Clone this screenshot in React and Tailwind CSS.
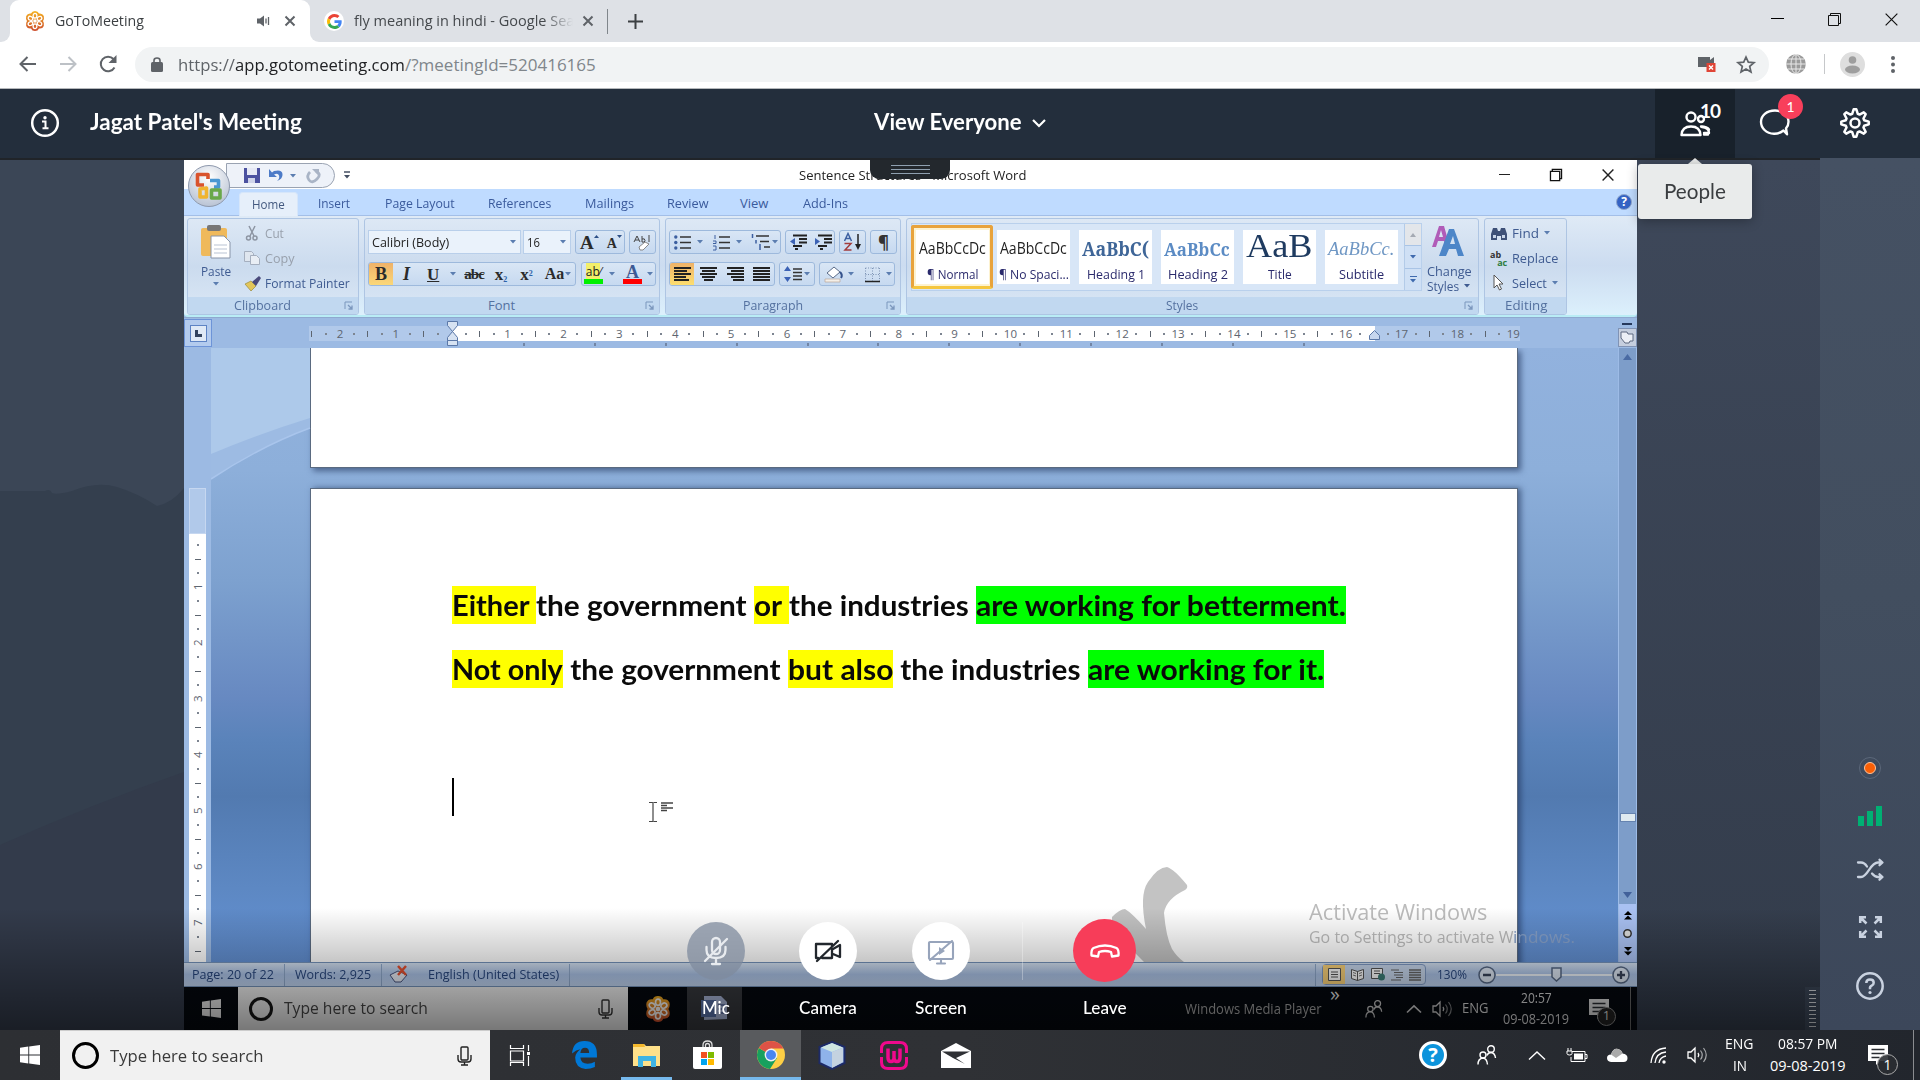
import React, { useLayoutEffect, useRef, useState } from "react";

/* Text that stretches horizontally to fill the width of its own box. */
function Fit({ className = "", children }) {
  const outer = useRef(null);
  const inner = useRef(null);
  const [k, setK] = useState(1);
  useLayoutEffect(() => {
    setK(outer.current.clientWidth / inner.current.offsetWidth);
  }, []);
  return (
    <span ref={outer} className={"flex shrink-0 items-center whitespace-pre leading-none " + className}>
      <span ref={inner} className="block shrink-0 origin-left" style={{ transform: `scaleX(${k})` }}>{children}</span>
    </span>
  );
}

function Svg({ w, h, className = "", children, vb }) {
  return (
    <svg width={w} height={h} viewBox={vb || `0 0 ${w} ${h}`} fill="none" className={"block shrink-0 overflow-visible " + className}>
      {children}
    </svg>
  );
}

const Caret = ({ className = "", c = "#5b7db0" }) => (
  <Svg w={6} h={4} className={className}><path d="M0 0h6L3 3.5z" fill={c} /></Svg>
);

const Flower = ({ s = 20, className = "" }) => (
  <Svg w={s} h={s} vb="0 0 20 20" className={className}>
    <defs><linearGradient id="fl" x1="0" y1="0" x2="0" y2="1"><stop offset="0" stopColor="#f5b321" /><stop offset="1" stopColor="#cc4b2c" /></linearGradient></defs>
    <path d="M10 0Q13 0 14 2.5Q17.5 2 18.8 5Q19.5 8 18 10Q19.5 12 18.8 15Q17.5 18 14 17.5Q13 20 10 20Q7 20 6 17.5Q2.5 18 1.2 15Q.5 12 2 10Q.5 8 1.2 5Q2.5 2 6 2.5Q7 0 10 0z" fill="url(#fl)" />
    <g stroke="#fff" strokeWidth="1.3">
      {[0, 60, 120, 180, 240, 300].map((a) => <ellipse key={a} cx="10" cy="4.8" rx="1.9" ry="2.4" transform={`rotate(${a} 10 10)`} />)}
    </g>
    <circle cx="10" cy="10" r="1.8" fill="#fff" />
  </Svg>
);

const Cross = ({ s = 10, className = "", c = "#5f6368", sw = 2 }) => (
  <Svg w={s} h={s} vb="0 0 10 10" className={className}><path d="M.5.5l9 9M9.5.5l-9 9" stroke={c} strokeWidth={sw} /></Svg>
);

const WinRestore = ({ s = 13, className = "", sw = 1 }) => (
  <Svg w={s} h={s} vb="0 0 13 13" className={className}><path d="M.5 2.5h10v10H.5zM2.5 2.5v-2h10v10h-2" stroke="#111" strokeWidth={sw} /></Svg>
);

const Mic = ({ className = "", c = "#333" }) => (
  <Svg w={15} h={20} className={className}>
    <rect x="4" y="1" width="7" height="13" rx="1" stroke={c} strokeWidth="1.4" />
    <path d="M1 9v4q0 3 3 3h7q3 0 3-3V9M7.500 16v3M4 19h7" stroke={c} strokeWidth="1.4" />
  </Svg>
);

const WinLogo = ({ s = 20, className = "", c = "#fff" }) => (
  <Svg w={s} h={s} vb="0 0 20 20" className={className}>
    <path d="M0 2.800l8.300-1.200v8H0zM9.200 1.500L20 0v9.600H9.200zM0 10.500h8.300v8L0 17.300zM9.200 10.500H20V20L9.200 18.500z" fill={c} />
  </Svg>
);

const PeopleGlyph = ({ s = 20, className = "", c = "#fff" }) => (
  <Svg w={s} h={s} vb="0 0 20 20" className={className}>
    <g stroke={c} strokeWidth="1.4">
      <circle cx="6" cy="10" r="3" /><circle cx="14" cy="4" r="3.3" />
      <path d="M1 19.500q0-6 5-6.500q4 .5 4.500 6.500M10 10.500q1-3 4-3q4 .5 4.500 5.500" />
    </g>
  </Svg>
);

const Speaker = ({ className = "", c = "#fff", s = 20 }) => (
  <Svg w={s} h={s} vb="0 0 20 20" className={className}>
    <path d="M1 7h3l4-4v14l-4-4H1z" stroke={c} strokeWidth="1.3" />
    <path d="M11 8q1.500 2 0 4" stroke={c} strokeWidth="1.3" />
    <path d="M13.500 5.500q3.500 4.500 0 9M16.500 3q5.500 7 0 14" stroke={c} strokeWidth="1.2" opacity=".6" />
  </Svg>
);

const Note = ({ className = "", c = "#fff", line = "#2a2d32" }) => (
  <Svg w={20} h={20} className={className}>
    <path d="M0 0h20v16h-8l-4 4v-4H0z" fill={c} /><path d="M3.500 4.500h13M3.500 8.500h13M3.500 12.500h8" stroke={line} strokeWidth="1.3" />
  </Svg>
);

/* ---------- Browser chrome ---------- */
function Browser() {
  return (
    <div className="h-[89px] border-b border-[#b5b8bb] bg-white font-['Open_Sans',sans-serif]">
      <div className="flex h-[42px] items-center bg-[#dee1e6]">
        <div className="flex h-[42px] w-2.5 items-end overflow-hidden bg-white"><div className="h-[42px] w-2.5 rounded-br-[9px] bg-[#dee1e6]" /></div>
        <div className="flex h-[42px] w-[300px] items-center rounded-t-[9px] bg-white">
          <Flower className="ml-[15px]" />
          <Fit className="ml-2.5 w-[89px] text-[14.5px] text-[#3c4043]">GoToMeeting</Fit>
          <Svg w={13} h={12} className="ml-[113px]"><path d="M0 3.500h3L7 .5v11L3 8.500H0z" fill="#5f6368" /><path d="M9 3.500v5M11.500 2v8" stroke="#5f6368" strokeWidth="1.3" /></Svg>
          <Cross className="ml-[15px]" />
        </div>
        <div className="flex h-[42px] w-3 overflow-hidden bg-white"><div className="h-[42px] w-3 rounded-bl-[9px] bg-[#dee1e6]" /></div>
        <div className="ml-[2px] flex h-5 w-5 shrink-0 items-center justify-center rounded-full bg-white">
          <Svg w={15} h={15} vb="0 0 48 48">
            <path fill="#EA4335" d="M24 9.500c3.540 0 6.710 1.220 9.210 3.600l6.850-6.850C35.900 2.380 30.470 0 24 0 14.620 0 6.510 5.380 2.560 13.220l7.980 6.190C12.430 13.720 17.740 9.500 24 9.500z" />
            <path fill="#4285F4" d="M46.980 24.550c0-1.570-.15-3.090-.38-4.550H24v9.020h12.940c-.58 2.960-2.260 5.480-4.780 7.180l7.730 6c4.510-4.180 7.090-10.360 7.090-17.650z" />
            <path fill="#FBBC05" d="M10.530 28.590c-.48-1.450-.76-2.990-.76-4.590s.27-3.140.76-4.590l-7.980-6.190C.92 16.460 0 20.120 0 24c0 3.880.92 7.540 2.560 10.780l7.970-6.190z" />
            <path fill="#34A853" d="M24 48c6.480 0 11.930-2.130 15.890-5.810l-7.730-6c-2.150 1.450-4.920 2.300-8.160 2.300-6.260 0-11.570-4.220-13.470-9.910l-7.980 6.190C6.510 42.620 14.620 48 24 48z" />
          </Svg>
        </div>
        <div className="ml-2.5 w-[220px] overflow-hidden [mask-image:linear-gradient(to_right,black_190px,transparent_219px)]">
          <Fit className="h-6 w-[220px] text-[14.5px] text-[#45494d]">fly meaning in hindi - Google Sea</Fit>
        </div>
        <Cross className="ml-[9px]" />
        <div className="ml-[14px] h-[25px] w-px bg-[#80868b]" />
        <Svg w={15} h={15} className="ml-5"><path d="M7.500 0v15M0 7.500h15" stroke="#3c4043" strokeWidth="2" /></Svg>
        <div className="ml-auto mr-[22px] flex items-center gap-[44px]">
          <div className="mb-[5px] h-px w-[13px] bg-black" />
          <WinRestore className="mb-[4px]" />
          <Cross s={13} c="#111" sw={0.9} className="mb-[4px]" />
        </div>
      </div>
      <div className="flex h-[46px] items-center pb-[2px]">
        <Svg w={17} h={16} className="ml-[19px]"><path d="M17 8H2M8.500 1L1.500 8l7 7" stroke="#5f6368" strokeWidth="2" /></Svg>
        <Svg w={17} h={16} className="ml-6"><path d="M0 8h15M8.500 1l7 7-7 7" stroke="#bdc1c6" strokeWidth="2" /></Svg>
        <Svg w={18} h={18} className="ml-[22px]"><path d="M15.500 12.500A7.300 7.300 0 1 1 14.500 4" stroke="#5f6368" strokeWidth="2" /><path d="M17.500 0v8h-8z" fill="#5f6368" /></Svg>
        <div className="ml-[18px] flex h-[35px] w-[1634px] items-center rounded-full bg-[#f1f3f4]">
          <Svg w={12} h={15} className="ml-4"><rect y="5" width="12" height="10" rx="1.500" fill="#5f6368" /><path d="M3 6V3.500Q3 1 6 1t3 2.500V6" stroke="#5f6368" strokeWidth="1.600" /></Svg>
          <Fit className="ml-[15px] w-[57px] text-[17px] text-[#5f6368]">https://</Fit>
          <Fit className="w-[170px] text-[17px] text-[#202124]">app.gotomeeting.com</Fit>
          <Fit className="w-[191px] text-[17px] text-[#80868b]">/?meetingId=520416165</Fit>
          <Svg w={18} h={16} className="ml-auto"><path d="M0 1h12v3l4-3v10H0z" fill="#5f6368" /><path d="M8.500 7h9v9h-9z" fill="#e04436" /><path d="M11 9.500l4 4M15 9.500l-4 4" stroke="#fff" strokeWidth="1.400" /></Svg>
          <Svg w={20} h={19} className="ml-5 mr-[13px]"><path d="M10 2l2.300 5.200 5.700.5-4.300 3.700 1.300 5.600-5-3-5 3 1.300-5.600L2 7.700l5.700-.5z" stroke="#5f6368" strokeWidth="1.700" /></Svg>
        </div>
        <Svg w={20} h={20} className="ml-[17px]">
          <circle cx="10" cy="10" r="9.800" fill="#9a9a9a" />
          <path d="M10 0v20M0 10h20M2 5h16M2 15h16" stroke="#e8e8e8" /><ellipse cx="10" cy="10" rx="5" ry="9.500" stroke="#e8e8e8" />
        </Svg>
        <div className="ml-[18px] h-5 w-px bg-[#c6c8ca]" />
        <Svg w={25} h={25} className="ml-[15px]"><circle cx="12.500" cy="12.500" r="12.500" fill="#dedede" /><circle cx="12.500" cy="8" r="3.800" fill="#9e9e9e" /><ellipse cx="12.500" cy="17.500" rx="7.500" ry="4" fill="#9e9e9e" /></Svg>
        <Svg w={4} h={17} className="ml-[26px]"><g fill="#5f6368"><circle cx="2" cy="2" r="2" /><circle cx="2" cy="8.500" r="2" /><circle cx="2" cy="15" r="2" /></g></Svg>
      </div>
    </div>
  );
}

/* ---------- Meeting header ---------- */
const gear = Array.from({ length: 32 }, (_, i) => {
  const a = (i / 32) * Math.PI * 2 + Math.PI / 32;
  const r = i % 4 === 0 || i % 4 === 3 ? 13.800 : 9.600;
  return `${i ? "L" : "M"}${(15 + r * Math.sin(a)).toFixed(2)} ${(15 - r * Math.cos(a)).toFixed(2)}`;
}).join("") + "z";

function Header() {
  return (
    <div className="flex h-[69px] items-center bg-[#232e3c] font-['Lato',sans-serif] text-white">
      <Svg w={28} h={28} className="mb-[2px] ml-[31px]"><circle cx="14" cy="14" r="12.800" stroke="#fff" strokeWidth="2.500" /><circle cx="14" cy="8.800" r="1.700" fill="#fff" /><path d="M11 12.500h3.500v6.500M11.500 19.300h6" stroke="#fff" strokeWidth="2" /></Svg>
      <Fit className="mb-[4px] ml-[31px] w-[212px] text-[23px] font-bold">Jagat Patel's Meeting</Fit>
      <Fit className="mb-[4px] ml-[572px] w-[148px] text-[22px] font-bold">View Everyone</Fit>
      <Svg w={14} h={8} className="mb-[2px] ml-[10px]"><path d="M1 1l6 6 6-6" stroke="#fff" strokeWidth="2.200" /></Svg>
      <div className="relative ml-[609px] flex h-[69px] w-20 shrink-0 bg-[#18212b]">
        <Svg w={32} h={26} className="ml-[25px] mt-[22px]">
          <g stroke="#fff" strokeWidth="2.400" strokeLinejoin="round" strokeLinecap="round">
            <circle cx="11" cy="6" r="4.500" /><circle cx="21" cy="8" r="3" />
            <path d="M1.500 24q.5-8.500 9.500-8.500t9.500 8.500zM21 15.500q6 0 8 3M24 23.500h4" /><path d="M22 16q7 .5 7 6h-5" />
          </g>
        </Svg>
        <span className="absolute left-[45px] top-[12px] text-[19px] font-bold leading-[20px] tracking-[-1px]">10</span>
      </div>
      <div className="relative mb-[2px] ml-[25px] h-[27px] w-8 shrink-0">
        <Svg w={30} h={27}><path d="M23.500 21.500Q19 25 14 24.800C6 24.500 1 19 1 12.800S6.500 1.500 15 1.500s13.500 5 13.500 11.300q0 4-2.500 6.500l1 6z" stroke="#fff" strokeWidth="2.400" strokeLinejoin="round" /></Svg>
        <span className="absolute -top-[15px] left-[18px] flex h-[25px] w-[25px] items-center justify-center rounded-full bg-[#f83f5b] text-[14px]">1</span>
      </div>
      <Svg w={30} h={30} className="mb-[2px] ml-12"><path d={gear} stroke="#fff" strokeWidth="2.500" strokeLinejoin="round" /><circle cx="15" cy="15" r="4.500" stroke="#fff" strokeWidth="2.500" /></Svg>
    </div>
  );
}

/* ---------- Word ribbon ---------- */
const Group = ({ className = "", label, labelClass = "", launcher = true, children }) => (
  <div className={"flex h-[97px] shrink-0 flex-col overflow-hidden rounded-[3px] border border-[#aec5e3] bg-gradient-to-b from-[#dde8f5] via-[#cbdbee] to-[#dbe8f6] " + className}>
    <div className="h-[78px] shrink-0">{children}</div>
    <div className="flex h-[17px] items-center justify-center bg-[#c1d8f0] text-[13px] text-[#54719f]">
      <div className={launcher ? "flex flex-1 justify-center pr-[7px]" : ""}><Fit className={labelClass}>{label}</Fit></div>
      {launcher && <Svg w={9} h={9} className="mr-[5px]"><path d="M1 8V1h7" stroke="#7b97bd" /><path d="M4 4l4 4M8 4.500V8H4.500" stroke="#7b97bd" strokeWidth="1.300" /></Svg>}
    </div>
  </div>
);
const Box = ({ className = "", children }) => (
  <div className={"flex h-6 shrink-0 items-center rounded-[3px] border border-[#9db9dc] bg-gradient-to-b from-[#d9e6f5] to-[#c6d9f0] " + className}>{children}</div>
);
const Tile = ({ sample, s, name, n }) => (
  <div className="flex h-[54px] w-[73px] shrink-0 flex-col overflow-hidden bg-white">
    <div className="flex h-[37px] items-center overflow-hidden pl-[3px]"><Fit className={s}>{sample}</Fit></div>
    <div className="flex h-[14px] justify-center text-[13px] text-[#2a2a6c]"><Fit className={n}>{name}</Fit></div>
  </div>
);
const Lines = ({ d, className = "", c = "#222" }) => (
  <Svg w={17} h={14} className={className}><path d={d} stroke={c} strokeWidth="1.800" /></Svg>
);
const serif = "font-['Liberation_Serif',serif] font-bold leading-none text-[#2b2b2b] ";

function Ribbon() {
  return (
    <div className="flex h-[101px] gap-[5px] rounded-b border-b-2 border-[#b9ecf5] bg-gradient-to-b from-[#dfeaf6] via-[#ccdcf0] to-[#dcf0fc] pl-[3px] pr-1 pt-[2px]">
      <Group className="w-[172px]" label="Clipboard" labelClass="w-[57px]">
        <div className="flex h-full pt-[5px]">
          <div className="ml-3 flex w-[32px] flex-col items-center">
            <Svg w={30} h={35}><rect x="0" y="4" width="26" height="28" rx="2" fill="#efb95b" /><rect x="6" y="1" width="14" height="6" rx="2" fill="#777" /><path d="M10 12h13l6 6v16H10z" fill="#fff" stroke="#8894a8" /><path d="M13 21h13M13 25h13M13 29h13" stroke="#b9c3d3" /></Svg>
            <Fit className="mt-[4px] h-4 w-[30px] text-[13px] text-[#3f5b91]">Paste</Fit>
            <Caret className="mt-[3px]" />
          </div>
          <div className="-mt-px ml-3 flex flex-col text-[13px] text-[#98a0ac]">
            <div className="flex h-[20px] items-center"><Svg w={16} h={15}><path d="M5 0l5 10M11 0L6 10" stroke="#8d95a3" strokeWidth="1.500" /><circle cx="4.500" cy="12" r="2" stroke="#8d95a3" strokeWidth="1.500" /><circle cx="11" cy="12" r="2" stroke="#8d95a3" strokeWidth="1.500" /></Svg><Fit className="ml-[5px] w-[19px]">Cut</Fit></div>
            <div className="mt-[5px] flex h-[20px] items-center"><Svg w={16} h={14}><path d="M.5.5h7l2 2v8h-9z" fill="#dfe6ef" stroke="#a5afbf" /><path d="M6.500 4.500h6l3 3v6h-9z" fill="#e9eef5" stroke="#a5afbf" /></Svg><Fit className="ml-[5px] w-[29px]">Copy</Fit></div>
            <div className="mt-[5px] flex h-[20px] items-center text-[#3f5b91]"><Svg w={17} h={15}><path d="M1 8l6-3 5 5-5 5z" fill="#e3c65a" stroke="#9a8a3c" strokeWidth=".7" /><path d="M8 6l7-6 2 2-5 8z" fill="#4a4a7c" /></Svg><Fit className="ml-1 w-[85px]">Format Painter</Fit></div>
          </div>
        </div>
      </Group>
      <Group className="w-[296px]" label="Font" labelClass="w-[27px]">
        <div className="flex pt-[11px]">
          <div className="ml-[3px] flex h-6 w-[153px] items-center border border-[#b9cfea] bg-[#eaf2fb] text-[13px] text-[#222]"><Fit className="ml-[3px] w-[77px]">Calibri (Body)</Fit><Caret className="ml-auto mr-1" /></div>
          <div className="ml-0.5 flex h-6 w-[48px] items-center border border-[#b9cfea] bg-[#eaf2fb] text-[13px] text-[#222]"><Fit className="ml-[3px] w-[13px]">16</Fit><Caret className="ml-auto mr-1" /></div>
          <Box className="ml-1 w-[50px]"><span className={serif + "ml-[4px] text-[19px]"}>A</span><Svg w={5} h={3} className="mb-3"><path d="M0 3h5L2.500 0z" fill="#2d4f86" /></Svg><span className={serif + "ml-2 mt-1 text-[14px]"}>A</span><Svg w={5} h={3} className="mb-3"><path d="M0 0h5L2.500 3z" fill="#2d4f86" /></Svg></Box>
          <Box className="ml-1 w-[27px]"><Svg w={18} h={16} className="ml-[3px]"><path d="M1 8L4 2l3 6M2 6h4M9 2v6M9 5q3-1 3 1.500T9 8M16 1v7" stroke="#444" /><path d="M6 13l6-5 4 2-6 6H7z" fill="#fff" stroke="#888" /></Svg></Box>
        </div>
        <div className="flex pt-[8px]">
          <Box className="ml-[3px] w-[208px] overflow-hidden">
            <div className="flex h-6 w-[24px] items-center justify-center bg-gradient-to-b from-[#eeb068] to-[#fbd979]"><span className={serif + "text-[18px]"}>B</span></div>
            <span className={serif + "ml-2.5 text-[18px] italic"}>I</span>
            <span className={serif + "ml-[17px] text-[17px] underline"}>U</span>
            <Caret className="ml-[11px]" />
            <span className={serif + "ml-2 text-[15px] tracking-[-1px] line-through"}>abc</span>
            <span className={serif + "ml-[11px] text-[17px]"}>x<sub className="text-[8px] text-[#2d62a8]">2</sub></span>
            <span className={serif + "ml-[13px] text-[17px]"}>x<sup className="text-[8px] text-[#2d62a8]">2</sup></span>
            <span className={serif + "ml-[12px] text-[16px]"}>Aa</span>
            <Caret className="ml-px" />
          </Box>
          <Box className="ml-[5px] w-[75px]">
            <div className="ml-[2px] flex w-[19px] flex-col items-center"><span className="text-[12px] leading-[14px] text-[#222]"><span className="bg-[#f3ef6a]">ab</span>⁄</span><div className="h-[5px] w-[19px] bg-[#00f000]" /></div>
            <Caret className="ml-1.5" />
            <div className="ml-2 flex w-[19px] flex-col items-center"><span className="font-['Liberation_Serif'] text-[18px] font-bold leading-[14px] text-[#3d5a94]">A</span><div className="h-[5px] w-[19px] bg-[#f00]" /></div>
            <Caret className="ml-[5px]" />
          </Box>
        </div>
      </Group>
      <Group className="w-[236px]" label="Paragraph" labelClass="w-[60px]">
        <div className="flex pt-[11px]">
          <Box className="ml-[3px] w-[112px]">
            <Svg w={17} h={15} className="ml-1"><path d="M6 2h11M6 7.500h11M6 13h11" stroke="#333" strokeWidth="1.600" /><g fill="#3c5fa0"><circle cx="1.800" cy="2" r="1.700" /><circle cx="1.800" cy="7.500" r="1.700" /><circle cx="1.800" cy="13" r="1.700" /></g></Svg>
            <Caret className="ml-1.5" />
            <Svg w={17} h={15} className="ml-2.5"><path d="M6 2h11M6 7.500h11M6 13h11" stroke="#333" strokeWidth="1.600" /><path d="M2 0v4M0 6h3v2.500H0M0 11h3v4H0" stroke="#3c5fa0" /></Svg>
            <Caret className="ml-[6px]" />
            <Svg w={19} h={16} className="ml-[9px]"><path d="M5 2h13M9 7.500h9M13 13h6" stroke="#333" strokeWidth="1.600" /><path d="M1.500 0v4M5 6v3.500M9 10v6" stroke="#3c5fa0" strokeWidth="1.500" /></Svg>
            <Caret className="ml-0.5" />
          </Box>
          <Box className="ml-1 w-[50px]">
            {["M6 4L1 7.500l5 3.500z", "M1 4l5 3.500L1 11z"].map((d, i) => (
              <Svg key={i} w={18} h={16} className={i ? "ml-[7px]" : "ml-[3px]"}><path d="M4 1.500h14M10 5h8M10 8.500h8M4 12h9M6 15h3" stroke="#222" strokeWidth="2" /><path d={d} fill="#3c62b5" /></Svg>
            ))}
          </Box>
          <Box className="ml-1 w-[27px]"><div className="ml-1 flex w-[8px]"><Svg w={8} h={18}><path d="M.5 8L4 .5 7.500 8M2 5.500h4" stroke="#3c5fa0" strokeWidth="1.500" /><path d="M.5 10.500h6.500l-6 6.500h6.500" stroke="#a33c3c" strokeWidth="1.500" /></Svg></div><Svg w={6} h={16} className="ml-[3px]"><path d="M3 0v12" stroke="#222" strokeWidth="1.500" /><path d="M0 10h6l-3 6z" fill="#222" /></Svg></Box>
          <Box className="ml-1 w-[27px] justify-center"><span className="text-[17px] font-bold leading-none text-[#333]">¶</span></Box>
        </div>
        <div className="flex pt-[8px]">
          <Box className="ml-[3px] w-[106px] overflow-hidden">
            <div className="flex h-6 w-[24px] items-center justify-center bg-gradient-to-b from-[#eeb068] to-[#fde06f]"><Lines d="M0 1h17M0 4h13M0 7h17M0 10h12M0 13h15" /></div>
            <Lines className="ml-1.5" d="M0 1h17M2 4h13M0 7h17M2 10h13M4 13h9" />
            <Lines className="ml-2.5" d="M0 1h17M4 4h13M0 7h17M4 10h13M6 13h11" />
            <Lines className="ml-[9px]" d="M0 1h17M0 4h17M0 7h17M0 10h17M0 13h17" />
          </Box>
          <Box className="ml-1 w-[36px]"><Svg w={18} h={18} className="ml-1"><path d="M0 6l3.500-5L7 6zM0 12l3.500 5L7 12z" fill="#3c62b5" /><path d="M9 4h9M9 7.500h9M9 11h9M9 14.500h9" stroke="#333" strokeWidth="1.700" /></Svg><Caret className="ml-[2px]" /></Box>
          <Box className="ml-1 w-[76px]"><Svg w={19} h={18} className="ml-1"><path d="M3 8l7-6 6 5-7 6z" fill="#fff" stroke="#5a6b88" /><path d="M16 7q3 3 1 6" stroke="#35528c" strokeWidth="2" /><path d="M1 14h15v3H1z" fill="#f4efe8" stroke="#b9a898" strokeWidth=".7" /></Svg><Caret className="ml-[5px]" /><Svg w={15} h={15} className="ml-[11px]"><path d="M.5 1h14M.5 7.500h14M.5 1v13M7.500 1v13M14.500 1v13" stroke="#7d93b5" strokeDasharray="1 1.500" /><path d="M0 14.500h15" stroke="#222" strokeWidth="1.500" /></Svg><Caret className="ml-1.5" /></Box>
        </div>
      </Group>
      <Group className="w-[573px]" label="Styles" labelClass="w-[32px]">
        <div className="flex">
          <div className="ml-1 mt-[4px] flex h-[68px] w-[511px] items-center border border-[#b9d0ec] bg-[#d8e6f7]">
            <div className="-ml-px flex h-[64px] w-[82px] shrink-0 items-center justify-center rounded-[3px] border-[3px] border-[#e8a33c] border-b-[#f5c63e] bg-[#fdf2cf]"><Tile sample="AaBbCcDc" s="w-[67px] text-[15.500px] text-[#222]" name="¶ Normal" n="w-[51px]" /></div>
            <div className="ml-[4px] flex gap-[9px]">
              <Tile sample="AaBbCcDc" s="w-[67px] text-[15.500px] text-[#222]" name="¶ No Spaci..." n="w-[70px]" />
              <Tile sample="AaBbC(" s="w-[67px] text-[20px] font-bold text-[#3f6698] font-['Noto_Serif','DejaVu_Serif',serif]" name="Heading 1" n="w-[58px]" />
              <Tile sample="AaBbCc" s="w-[66px] text-[18px] font-bold text-[#5b8bc4] font-['Noto_Serif','DejaVu_Serif',serif]" name="Heading 2" n="w-[60px]" />
              <Tile sample="AaB" s="w-[66px] pb-[5px] text-[34px] text-[#1f3b60] font-['Liberation_Serif',serif]" name="Title" n="w-[24px]" />
              <Tile sample="AaBbCc." s="w-[67px] text-[18px] italic text-[#6f97c4] font-['Liberation_Serif',serif]" name="Subtitle" n="w-[45px]" />
            </div>
            <div className="ml-auto flex h-full w-[17px] flex-col border-l border-[#b3cbe8]">
              <div className="flex flex-1 items-center justify-center bg-[#e3e6ea]"><Svg w={6} h={4}><path d="M0 4h6L3 0z" fill="#a5aab3" /></Svg></div>
              <div className="flex flex-1 items-center justify-center border-y border-[#a9c4e6] bg-[#cfe0f5]"><Caret c="#3f6aae" /></div>
              <div className="flex flex-1 flex-col items-center justify-center gap-0.5 bg-[#cfe0f5]"><div className="h-px w-[7px] bg-[#3f6aae]" /><Caret c="#3f6aae" /></div>
            </div>
          </div>
          <div className="ml-[4px] mt-[6px] flex w-[46px] flex-col items-center text-[13px] text-[#3f5b91]">
            <Svg w={34} h={32} className="mr-[3px]"><path d="M1 22L8 1h5l6 21h-4l-2-6H7l-2 6zM8 12h4l-2-7z" fill="#b05cb8" /><path d="M8 31L18 4h5l10 27h-6l-2-7h-7l-3 7zM19 19h5l-2-8z" fill="#4d86c8" /></Svg>
            <Fit className="mt-1.5 h-4 w-[45px]">Change</Fit>
            <div className="mt-[-1px] flex h-4 items-center gap-[5px] self-start pl-px"><Fit className="w-[32px]">Styles</Fit><Caret c="#3f5b91" /></div>
          </div>
        </div>
      </Group>
      <Group className="w-[83px]" label="Editing" labelClass="w-[42px]" launcher={false}>
        <div className="flex flex-col pl-[5px] pt-1 text-[13px] text-[#3f5b91]">
          <div className="flex h-[20px] items-center"><Svg w={18} h={15}><path d="M1 14V8l2-6h4l1 3h2l1-3h4l2 6v6h-6v-4H7v4z" fill="#3d5077" /><path d="M3 9h3v3H3zM12 9h3v3h-3z" fill="#c7d4e8" /></Svg><Fit className="ml-1 w-[27px]">Find</Fit><Caret className="ml-[5px]" /></div>
          <div className="mt-[5px] flex h-[20px] items-center"><div className="flex w-[18px] items-center text-[9px] font-bold leading-[9px] text-[#333]"><span className="mb-2">ab</span><span className="-ml-1 mt-2 text-[#2f7d3f]">ac</span></div><Fit className="ml-1 w-[46px]">Replace</Fit></div>
          <div className="mt-[5px] flex h-[20px] items-center"><Svg w={18} h={16}><path d="M4 0v13l3-3 2.500 5 2-1L9 9h4z" fill="#fff" stroke="#555" /></Svg><Fit className="ml-1 w-[35px]">Select</Fit><Caret className="ml-[5px]" /></div>
        </div>
      </Group>
    </div>
  );
}

const cells = (from, to) => {
  const out = [];
  for (let n = from; n <= to; n++) out.push("|", "·", n === 0 ? "" : String(Math.abs(n)), "·");
  return out;
};

function Ruler() {
  return (
    <div className="flex h-[30px] bg-[#9cbae3]">
      <div className="mt-px flex h-[28px] w-[28px] shrink-0 items-center justify-center border border-[#6d94d8] bg-[#b3cbee]"><div className="flex h-[17px] w-[17px] items-center justify-center border border-[#5d83c4] bg-[#dfe9f6]"><div className="h-[7px] w-[7px] border-b-[3px] border-l-[3px] border-[#33435e]" /></div></div>
      <div className="ml-[97px] mt-[8px] w-[1211px]">
        <div className="relative flex h-[15px] items-center bg-[linear-gradient(to_right,#b1c9ea_143px,#fff_143px,#fff_1066px,#b1c9ea_1066px)]">
          <div className="-ml-1 flex h-[15px] w-[1217px] overflow-hidden text-[11.500px] leading-[15px] text-[#5d6570]">
            {cells(-2, 19).slice(0, 87).map((t, i) => (
              <span key={i} className="flex w-[13.980px] shrink-0 items-center justify-center">{t === "|" ? <span className="h-[6px] w-px bg-[#5d6570]" /> : t === "·" ? <span className="h-[2px] w-[2px] bg-[#7d8591]" /> : t}</span>
            ))}
          </div>
          <Svg w={11} h={26} className="absolute left-[138px] top-[-5px]"><path d="M.5.5h10v4l-5 6 5 6v3H.5v-3l5-6-5-6zM.5 19.500h10v5H.5z" fill="#d6e2f2" stroke="#5b78a8" /></Svg>
          <Svg w={11} h={11} className="absolute left-[1060px] top-[4px]"><path d="M5.500.5l5 5v4H.5v-4z" fill="#c6d6ee" stroke="#5b78a8" /></Svg>
        </div>
        <div className="ml-[214px] flex h-[6px] items-center gap-[68.900px]">
          {Array.from({ length: 12 }, (_, i) => <span key={i} className="h-[3px] w-[2px] shrink-0 bg-[#7386a5]" />)}
        </div>
      </div>
      <div className="ml-auto flex w-[20px] flex-col items-center"><div className="mt-[5px] h-[2px] w-[10px] bg-[#26395c]" /><div className="mt-[3px] flex h-[19px] w-[19px] items-center justify-center border border-[#8093b5] bg-[#c5cede]"><Svg w={14} h={13}><path d="M1 1h6l1 2h5v7h-3l-1 2H5L1 7z" fill="#eceff6" stroke="#5d6880" /></Svg></div></div>
    </div>
  );
}

const mark = "bg-[#ff0] ";
const ok = "bg-[#0f0] ";

function Document() {
  return (
    <div className="flex h-[614px] bg-[#9cbae3]">
      <div className="w-[27px] shrink-0 overflow-hidden px-[5px] pt-[140px]">
        <div className="h-[46px] border border-[#c6d7f0] bg-[#b1c9ea]" />
        <div className="flex h-[430px] flex-col bg-white pt-1 text-[11.500px] text-[#5d6570]">
          {["·", "|", "·", "1", "·", ...cells(2, 7), "|", "·"].slice(0, 30).map((t, i) => (
            <span key={i} className="flex h-[14px] shrink-0 items-center justify-center leading-none">{t === "|" ? <span className="h-px w-[6px] bg-[#5d6570]" /> : t === "·" ? <span className="h-[2px] w-[2px] bg-[#7d8591]" /> : <span className="-rotate-90">{t}</span>}</span>
          ))}
        </div>
      </div>
      <div className="relative flex w-[1407px] shrink-0 flex-col overflow-hidden bg-[linear-gradient(to_bottom,#92b2de_0,#8dafda_20%,#7da1cf_38%,#6789c1_57%,#5a83ba_64%,#527ab0_73%,#5d88c3_88%,#6391d4_100%)] pl-[99px]">
        <Svg w={99} h={131} className="absolute left-0 top-0"><path d="M0 0h99v80Q50 98 0 131z" fill="#9dbbe3" /><path d="M0 0h99v70Q50 85 0 106z" fill="#adc9ea" /><path d="M0 131Q50 98 99 80" stroke="#a9c5ec" strokeWidth="1.500" /></Svg>
        <div className="h-[120px] w-[1208px] shrink-0 border-x border-b border-[#5a6a80] bg-white shadow-[3px_3px_6px_rgba(30,50,90,0.6)]" />
        <div className="mt-[20px] h-[500px] w-[1208px] shrink-0 border border-[#5a6a80] bg-white pl-[141px] pt-[97px] font-['Lato',sans-serif] text-[28px] font-bold text-[#0a0a0a] shadow-[3px_0_6px_rgba(30,50,90,0.6)] [font-variant-ligatures:none]">
          <div className="flex h-[38px]">
            <Fit className={mark + "w-[84px]"}>{"Either "}</Fit>
            <Fit className="w-[218px]">{"the government "}</Fit>
            <Fit className={mark + "w-[35px]"}>{"or "}</Fit>
            <Fit className="w-[187px]">{"the industries "}</Fit>
            <Fit className={ok + "w-[370px]"}>are working for betterment.</Fit>
          </div>
          <div className="mt-[26px] flex h-[38px]">
            <Fit className={mark + "w-[111px]"}>Not only</Fit>
            <Fit className="w-[225px]">{" the government "}</Fit>
            <Fit className={mark + "w-[105px]"}>but also</Fit>
            <Fit className="w-[195px]">{" the industries "}</Fit>
            <Fit className={ok + "w-[236px]"}>are working for it.</Fit>
          </div>
          <div className="mt-[90px] h-[38px] w-[2px] bg-black" />
        </div>
        <Svg w={24} h={20} className="absolute left-[438px] top-[454px]"><path d="M0 .5h3.500q.5 0 .5 1v17q0 1-.5 1H0M8 .5H4.500M8 19.500H4.500" stroke="#444" strokeWidth="1.200" /><path d="M12 1h12M12 3.500h6M12 6h12M12 8.500h6" stroke="#444" strokeWidth="1.300" /></Svg>
        <Svg w={76} h={95} className="absolute left-[901px] top-[519px]"><path d="M55 0Q62 2 75 18Q76 21 73 23Q54 32 52 46Q54 70 60 82Q65 90 72 95H32Q14 78 0 56L0 50Q8 42 13 42Q20 46 34 62Q27 28 36 15Q46 0 55 0z" fill="#c3c3c3" /></Svg>
        <div className="absolute left-[1098px] top-[551px] font-['Open_Sans',sans-serif] text-[#bcbcbc]">
          <Fit className="h-[26px] w-[178px] text-[21px]">Activate Windows</Fit>
          <div className="-mt-px flex"><Fit className="h-[25px] w-[204px] text-[17px]">{"Go to Settings to activate W"}</Fit><Fit className="h-[25px] w-[62px] text-[17px] text-[#86a0c8]">indows.</Fit></div>
        </div>
      </div>
      <div className="flex w-[19px] shrink-0 flex-col items-center border-x border-[#9dbbe6] bg-[#7d9dc9]">
        <Svg w={9} h={6} className="mt-[6px]"><path d="M0 6h9L4.500 0z" fill="#4a6ba3" /></Svg>
        <div className="mt-[453px] h-[9px] w-[16px] border border-[#6583b0] bg-[#dfeaf0]" />
        <Svg w={9} h={6} className="mt-[70px]"><path d="M0 0h9L4.500 6z" fill="#42619a" /></Svg>
        <div className="mt-auto flex h-[58px] w-full flex-col items-center justify-around bg-[#a9c1f2] py-0.5">
          <Svg w={8} h={9}><path d="M0 4l4-4 4 4zM0 8.500l4-4 4 4z" fill="#000" /></Svg>
          <Svg w={9} h={9}><circle cx="4.500" cy="4.500" r="3.700" fill="#ddd" stroke="#333" strokeWidth="1.500" /></Svg>
          <Svg w={8} h={9}><path d="M0 0h8L4 4zM0 4.500h8l-4 4z" fill="#000" /></Svg>
        </div>
      </div>
    </div>
  );
}

function StatusBar() {
  const div = "h-[22px] w-px bg-[#8fa9cc] ";
  return (
    <div className="flex h-[25px] items-center border-y border-[#7593bb] bg-gradient-to-b from-[#d6e3f3] via-[#adc5ea] to-[#c4d8f4] text-[13px] text-[#28477f]">
      <Fit className="ml-[8px] w-[82px]">Page: 20 of 22</Fit><div className={div + "ml-2.5"} />
      <Fit className="ml-2.5 w-[76px]">Words: 2,925</Fit><div className={div + "ml-2.5"} />
      <Svg w={19} h={17} className="ml-2"><path d="M0 9l8-4 9 4-6 7H5z" fill="#e8ecf5" stroke="#46527c" /><path d="M8 0l8 9M16 0L8 9" stroke="#e5502f" strokeWidth="2.500" /></Svg>
      <Fit className="ml-[19px] w-[131px]">English (United States)</Fit><div className={div + "ml-2.5"} />
      <div className={div + "ml-[745px]"} />
      <div className="ml-[6px] flex h-[21px] w-[104px] items-center justify-between rounded-sm border border-[#7f9ac4] bg-[#c9d9ef] pr-1">
        <div className="flex h-[19px] w-[22px] items-center justify-center bg-[#fbd37a]"><Svg w={13} h={13}><path d="M.5.5h12v12H.5zM3 4h7M3 6.500h7M3 9h7" stroke="#555" fill="#fff" /></Svg></div>
        <Svg w={13} h={13}><path d="M.5 1.500l6 2v9l-6-2zM12.500 1.500l-6 2v9l6-2z" stroke="#555" fill="#fff" /><path d="M2 4.500l3 1M2 7l3 1M11 4.500l-3 1M11 7l-3 1" stroke="#777" /></Svg>
        <Svg w={14} h={13}><path d="M.5.5h11v10H.5zM3 3h6M3 5.500h6" stroke="#555" fill="#fff" /><circle cx="10.500" cy="9" r="3.500" fill="#3d7f78" /></Svg>
        <Svg w={12} h={12}><path d="M0 1h8M3 3.500h9M3 6h9M5 8.500h7M0 11h10" stroke="#666" strokeWidth="1.200" /></Svg>
        <Svg w={12} h={12}><path d="M0 1h12M0 3.500h12M0 6h12M0 8.500h12M0 11h12" stroke="#666" strokeWidth="1.300" /></Svg>
      </div>
      <Fit className="ml-[11px] w-[30px]">130%</Fit>
      <Svg w={153} h={18} className="ml-[11px]">
        <path d="M18 9h118" stroke="#eef4fb" strokeWidth="2" />
        <circle cx="9" cy="9" r="8" fill="#dce6f3" stroke="#566885" strokeWidth="1.500" /><path d="M5 9h8" stroke="#39445a" strokeWidth="2.500" />
        <path d="M74 2h9v9l-4.500 4L74 11z" fill="#dce6f3" stroke="#566885" strokeWidth="1.500" />
        <circle cx="143" cy="9" r="8" fill="#dce6f3" stroke="#566885" strokeWidth="1.500" /><path d="M139 9h8M143 5v8" stroke="#39445a" strokeWidth="2.300" />
      </Svg>
    </div>
  );
}

function InnerTaskbar() {
  return (
    <div className="flex h-[43px] items-center bg-[#04080e] text-[#d8d8d8]">
      <div className="flex w-[54px] shrink-0 justify-center"><WinLogo s={19} c="#e8e8e8" /></div>
      <div className="flex h-[43px] w-[390px] shrink-0 items-center bg-[#efefef]">
        <div className="ml-[11px] h-[24px] w-[24px] rounded-full border-[3.500px] border-[#151515]" />
        <Fit className="ml-[11px] w-[144px] text-[16.500px] text-[#454545]">Type here to search</Fit>
        <Mic className="ml-[170px]" />
      </div>
      <div className="flex w-[59px] shrink-0 justify-center"><Flower s={26} /></div>
      <div className="flex h-[43px] w-[55px] shrink-0 items-center justify-center bg-[#36383d]"><Svg w={27} h={26}><path d="M3 0h17l6 6v17l-23 1z" fill="#a9b6d8" /><path d="M0 4h15v17H0z" fill="#5871a8" /><path d="M17 9h7M17 13h7M17 17h7" stroke="#4e6295" strokeWidth="1.500" /></Svg></div>
      <Fit className="ml-[443px] w-[137px] text-[14px] text-[#a5a5a5]">Windows Media Player</Fit>
      <span className="mb-[30px] ml-[8px] w-[11px] text-[20px] leading-none text-[#ddd]">»</span>
      <PeopleGlyph s={18} c="#c8c8c8" className="ml-[24px]" />
      <Svg w={14} h={8} className="ml-[24px]"><path d="M0 7.500l7-6.500 7 6.500" stroke="#ccc" strokeWidth="1.700" /></Svg>
      <Speaker c="#c8c8c8" s={20} className="ml-[11px]" />
      <Fit className="ml-2.5 w-[27px] text-[14.500px]">ENG</Fit>
      <div className="ml-[14px] flex w-[66px] shrink-0 flex-col items-center text-[14px]"><Fit className="h-[20px] w-[31px]">20:57</Fit><Fit className="h-[21px] w-[66px]">09-08-2019</Fit></div>
      <div className="relative ml-[20px]"><Note c="#dcdcdc" /><span className="absolute left-[8px] top-[8px] flex h-[19px] w-[19px] items-center justify-center rounded-full border border-[#888] bg-[#222] text-[13px]">1</span></div>
      <div className="ml-[21px] h-[43px] w-px bg-[#666]" />
    </div>
  );
}

function WordScreen() {
  return (
    <div className="relative w-[1453px] shrink-0 overflow-hidden bg-[#9cbae3] font-['Open_Sans',sans-serif]">
      <div className="flex h-[29px] items-center bg-white">
        <div className="ml-[42px] mt-0.5 flex h-[25px] w-[109px] items-center rounded-r-full border border-[#9aa3b2] bg-[#eef2f9]">
          <Svg w={16} h={15} className="ml-[17px]"><path d="M0 0h16v15H0z" fill="#4b51a0" /><path d="M3 0h10v7H3z" fill="#e6e9f5" /><path d="M4 10h7v5H4z" fill="#cfd4ea" /></Svg>
          <Svg w={14} h={13} className="ml-[9px]"><path d="M0 0v8h8L5 5.500q4-2 5 1T8 12q6-2 5.500-7T5 2L3 3.500z" fill="#4d7bc7" /></Svg>
          <Caret className="ml-[7px]" />
          <Svg w={13} h={14} className="ml-[10px]"><path d="M4 3Q0 7 3 11t8-1-1-7.500" stroke="#a9b4c6" strokeWidth="2.800" /><path d="M6 0h7v7z" fill="#a9b4c6" /></Svg>
        </div>
        <Svg w={6} h={8} className="ml-[9px]"><path d="M0 1h6" stroke="#444f63" strokeWidth="1.500" /><path d="M0 4h6L3 7.500z" fill="#444f63" /></Svg>
        <Fit className="ml-[449px] mt-0.5 w-[227px] text-[13.500px] text-[#222]">Sentence Structures - Microsoft Word</Fit>
        <div className="ml-[473px] h-px w-[11px] bg-[#222]" />
        <WinRestore className="ml-10" s={12} sw={1.4} />
        <Cross className="ml-10" s={12} c="#222" sw={1.2} />
      </div>
      <div className="flex h-[27px] items-center border-b border-[#a3bfe8] bg-[#bfdbff] pt-[3px] text-[13px] text-[#3a5a9c]">
        <div className="ml-[55px] flex h-[24px] w-[59px] items-center justify-center rounded-t-[4px] border-x border-t border-[#d6e6fa] bg-[#e6effa]"><Fit className="w-[33px] text-[#43597f]">Home</Fit></div>
        <Fit className="ml-5 w-[32px]">Insert</Fit>
        <Fit className="ml-[35px] w-[70px]">Page Layout</Fit>
        <Fit className="ml-[33px] w-[63px]">References</Fit>
        <Fit className="ml-[34px] w-[49px]">Mailings</Fit>
        <Fit className="ml-[33px] w-[41px]">Review</Fit>
        <Fit className="ml-8 w-[28px]">View</Fit>
        <Fit className="ml-[35px] w-[45px]">Add-Ins</Fit>
        <div className="mb-[3px] ml-auto mr-[5px] flex h-[16px] w-[16px] items-center justify-center rounded-full border border-[#8fa6cc] bg-[#3563c4] text-[12px] font-bold text-white">?</div>
      </div>
      <Ribbon />
      <div className="h-px bg-[#8fa9cf]" />
      <Ruler />
      <Document />
      <StatusBar />
      <InnerTaskbar />
      <Svg w={42} h={42} className="absolute left-[4px] top-[5px]">
        <defs><radialGradient id="orb" cx=".5" cy=".3" r=".7"><stop offset="0" stopColor="#fff" /><stop offset="1" stopColor="#b9c3d4" /></radialGradient></defs>
        <circle cx="21" cy="21" r="20.500" fill="url(#orb)" stroke="#8e99ad" />
        <g strokeWidth="3.600" strokeLinejoin="round">
          <path d="M16 20H9.500V9.500H20V14" stroke="#d9532c" /><path d="M22 15.500h8.500V22H26" stroke="#4a97d2" />
          <path d="M18.500 23v9H12v-8z" stroke="#f0b430" /><path d="M23.500 25H32v8h-8.500z" stroke="#6aa84a" />
        </g>
      </Svg>
      <div className="absolute left-[686px] top-0 flex h-[19px] w-[80px] flex-col items-center rounded-b-[9px] bg-[#23282d] pt-[5px]">
        <div className="flex w-[39px] flex-col gap-[3px]"><div className="h-px bg-[#8fa0b0]" /><div className="h-px bg-[#8fa0b0]" /><div className="h-px bg-[#8fa0b0]" /></div>
      </div>
    </div>
  );
}

/* ---------- Meeting controls ---------- */
function CallControls() {
  const col = "flex flex-col items-center ";
  return (
    <div className="absolute inset-x-0 bottom-0 flex h-[122px] bg-gradient-to-b from-transparent to-black/50 pt-[11px] font-['Lato',sans-serif] text-[18px] font-medium text-white">
      <div className={col + "ml-[687px] w-[58px] pt-[3px]"}>
        <div className="flex h-[58px] w-[58px] items-center justify-center rounded-full bg-[#7f8b9d]/75">
          <Svg w={24} h={28}><g stroke="#e8ebef" strokeWidth="2.300" strokeLinecap="round"><rect x="8" y="1" width="8" height="16" rx="4" /><path d="M2.500 10v3q0 8 9.500 8t9.500-8v-3M12 21v6M8 27h8M1 24L23 2" /></g></Svg>
        </div>
        <Fit className="mt-[16px] h-[22px] w-[28px]">Mic</Fit>
      </div>
      <div className={col + "ml-[54px] w-[58px] pt-[3px]"}>
        <div className="flex h-[58px] w-[58px] items-center justify-center rounded-full bg-white">
          <Svg w={26} h={22}><g stroke="#22272d" strokeWidth="2.300" strokeLinejoin="round" strokeLinecap="round"><path d="M3 18H1V4h16v14H7M18 9l7-4v12l-7-3M2 21L23 1" /></g></Svg>
        </div>
        <Fit className="mt-[16px] h-[22px] w-[58px]">Camera</Fit>
      </div>
      <div className={col + "ml-[55px] w-[58px] pt-[3px]"}>
        <div className="flex h-[58px] w-[58px] items-center justify-center rounded-full bg-white">
          <Svg w={26} h={24} className="mt-1"><g stroke="#97a4bb" strokeWidth="2.100" strokeLinejoin="round" strokeLinecap="round"><rect x="1" y="1" width="24" height="17" rx="1" /><path d="M9 22.500h8M13 19v3M2 19L24 0" /></g><path d="M11 6l6 4-6 4z" fill="#97a4bb" /></Svg>
        </div>
        <Fit className="mt-[16px] h-[22px] w-[52px]">Screen</Fit>
      </div>
      <div className="ml-[52px] mt-[3px] h-[58px] w-px bg-white/30" />
      <div className={col + "ml-[50px] w-[63px]"}>
        <div className="flex h-[63px] w-[63px] items-center justify-center rounded-full bg-[#f73d59]">
          <Svg w={30} h={14}><path d="M1.500 11.500Q1 5.500 3.500 4Q15-1 26.500 4Q29 5.500 28.500 11.500L22 12.500L21 8Q15 6 9 8L8 12.500z" stroke="#fff" strokeWidth="2.300" strokeLinejoin="round" /></Svg>
        </div>
        <Fit className="mt-[14px] h-[22px] w-[44px]">Leave</Fit>
      </div>
    </div>
  );
}

function Sidebar() {
  return (
    <div className="flex w-[100px] shrink-0 flex-col items-center bg-gradient-to-b from-[#455163] via-[#424e5f] to-[#3c475a]">
      <div className="mt-[599px] flex h-[22px] w-[22px] items-center justify-center rounded-full border border-[#5b6779]"><div className="h-3 w-3 rounded-full border border-[#ffc39b] bg-[#fa5f05]" /></div>
      <div className="mt-[27px] flex items-end gap-[3px]"><div className="h-[10px] w-[6px] bg-[#00b073]" /><div className="h-[15px] w-[6px] bg-[#00b073]" /><div className="h-[20px] w-[6px] bg-[#00b073]" /></div>
      <Svg w={27} h={21} className="mt-[33px]"><g stroke="#c9d2e0" strokeWidth="2.300" strokeLinecap="round" strokeLinejoin="round"><path d="M1 18h3c7 0 9-14.500 17-14.500h4M1 3.500h3q3.500 0 6 4M15 14.500q3 3.500 6 3.500h4M22.500.8l3 2.700-3 2.700M22.500 15.300l3 2.700-3 2.700" /></g></Svg>
      <Svg w={23} h={22} className="mt-[36px]"><g stroke="#c9d2e0" strokeWidth="2.500"><path d="M1.200 7V1.200H7M1.500 1.500l6 6M16 1.200h5.800V7M21.500 1.500l-6 6M1.200 15v5.800H7M1.500 20.500l6-6M16 20.800h5.800V15M21.500 20.500l-6-6" /></g></Svg>
      <Svg w={28} h={28} className="mt-[34px]"><circle cx="14" cy="14" r="12.700" stroke="#c9d2e0" strokeWidth="2.500" /><path d="M10.300 11q0-3.500 3.700-3.500t3.700 3.200q0 2-2 3T14 16.500v.8" stroke="#c9d2e0" strokeWidth="2.500" /><circle cx="14" cy="20.500" r="1.600" fill="#c9d2e0" /></Svg>
    </div>
  );
}

/* ---------- Windows taskbar ---------- */
function Taskbar() {
  return (
    <div className="flex h-[50px] items-center bg-gradient-to-r from-[#2d2f33] via-[#2f3135] to-[#22262d] font-['Open_Sans',sans-serif] text-white">
      <WinLogo className="ml-5" />
      <div className="ml-5 flex h-[50px] w-[430px] shrink-0 items-center border-t border-[#ccc] bg-[#f1f1f1]">
        <div className="ml-[12px] h-[27px] w-[27px] rounded-full border-[3.500px] border-black" />
        <Fit className="ml-[11px] w-[153px] text-[17px] text-[#3a3a3a]">Type here to search</Fit>
        <Mic className="ml-[194px]" c="#222" />
      </div>
      <Svg w={21} h={21} className="ml-5"><path d="M.5 0v3.500h13V0M.5 6h13v10H.5zM.5 21v-3.500h13V21M18.500 0v6M18.500 11v10" stroke="#fff" strokeWidth="1.200" /><path d="M17 7h3v3h-3z" fill="#fff" /></Svg>
      <Svg w={25} h={28} vb="0 0 24 27" className="ml-[41px]"><path d="M0 12Q1 0 12 0Q24 0 24 13v3H8q.5 6 7 6q4 0 7-2v5q-4 2-9 2Q3 26 3 16q0-4 5-8q-4 .5-8 4zM8 11.500h8.500q0-5-4-5T8 11.500z" fill="#0078d7" fillRule="evenodd" /></Svg>
      <div className="ml-[24px] flex h-[50px] w-[51px] shrink-0 flex-col items-center justify-end">
        <Svg w={28} h={24} className="mb-[10px]"><path d="M0 1h11l2 2h14v20H0z" fill="#ffe18a" /><path d="M0 1h11l1 3H0z" fill="#f5b92d" /><path d="M5 24V13h18v11h-5v-6h-8v6z" fill="#3fb4e4" /></Svg>
        <div className="h-[3px] w-full bg-[#76b9ed]" />
      </div>
      <Svg w={29} h={30} className="ml-[21px]"><path d="M10 8V5q0-4 4.500-4T19 5v3M12.500 8V5.500q0-2 2-2t2 2V8" stroke="#ddd" strokeWidth="1.300" /><path d="M0 7h29v20q0 2-2 2H2q-2 0-2-2z" fill="#fff" /><path d="M8 12h6v6H8z" fill="#f25022" /><path d="M15 12h6v6h-6z" fill="#7fba00" /><path d="M8 19h6v6H8z" fill="#00a4ef" /><path d="M15 19h6v6h-6z" fill="#ffb900" /></Svg>
      <div className="ml-[18px] flex h-[50px] w-[61px] shrink-0 flex-col items-center justify-end bg-[#595b5e]">
        <Svg w={28} h={28} className="mb-[8px]"><circle cx="14" cy="14" r="14" fill="#fdcf45" /><path d="M14 14L1.900 7A14 14 0 0 0 13 28l7-11z" fill="#18a05e" /><path d="M14 14L1.900 7A14 14 0 0 1 26.500 7.500H14z" fill="#de5246" /><circle cx="14" cy="14" r="6.400" fill="#f1f1f1" /><circle cx="14" cy="14" r="5" fill="#4a86f0" /></Svg>
        <div className="h-[3px] w-full bg-[#76b9ed]" />
      </div>
      <Svg w={28} h={29} className="ml-[17px]"><path d="M14 1l12.500 5v16L14 28 1.500 22V6z" fill="#8fb3ea" stroke="#1d2a66" strokeWidth="2" /><path d="M14 2l11 4.500L14 11 3 6.500z" fill="#cfe6e2" /><path d="M14 11l11-4.500V21l-11 6z" fill="#c4d2e0" /></Svg>
      <Svg w={28} h={29} className="ml-[34px]"><path d="M1.500 12V8q0-6.500 6.500-6.500h12q6.500 0 6.500 6.500v4M1.500 16v5q0 6.500 6.500 6.500h12q6.500 0 6.500-6.500v-5" stroke="#f0098d" strokeWidth="3" /><path d="M8 7.500v9q0 4 3 4t3-3.500V10v7q0 3.500 3 3.500t3-4v-9" stroke="#f0098d" strokeWidth="3.500" /></Svg>
      <Svg w={30} h={25} className="ml-[33px]"><path d="M0 8L15 0l15 8v17H0z" fill="#fff" /><path d="M1 8.500h28L15 15l9 6-12-6z" fill="#2e3034" /></Svg>
      <div className="ml-[448px] flex h-[28px] w-[28px] shrink-0 items-center justify-center rounded-full border-[3px] border-white bg-[#0c94dc] text-[20px] font-bold leading-none">?</div>
      <PeopleGlyph className="ml-[30px]" />
      <Svg w={16} h={9} className="ml-[32px]"><path d="M0 8.500L8 1l8 7.500" stroke="#fff" strokeWidth="1.400" /></Svg>
      <Svg w={21} h={15} className="ml-[22px]"><path d="M5 3.500h13v10H4V9M18 6.500h2v4h-2M1 0v3M4 0v3M0 3h5v2.500Q5 7 2.500 7T0 5.500z" stroke="#fff" /><path d="M7 5.500h9v6H7z" fill="#fff" /></Svg>
      <Svg w={21} h={14} className="ml-[19px]"><path d="M4 14q-4-.5-4-4t4-3.500Q6 0 11 1q4 1 4.500 4.500 5 .5 5 4.500t-4 4z" fill="#fff" /><path d="M4 6.500Q6 0 11 1q4 1 4.500 4.500L9 10z" fill="#aaa" /></Svg>
      <Svg w={17} h={17} className="ml-[22px]"><g stroke="#fff" strokeWidth="1.300"><path d="M1 16Q2 2 16 1M5 16Q6 6 16 5M9 16q1-6 7-7" /></g><circle cx="14" cy="15" r="1.700" fill="#fff" /></Svg>
      <Speaker className="ml-[20px]" />
      <div className="ml-[18px] flex w-[29px] shrink-0 flex-col items-center text-[14.500px]"><Fit className="h-[22px] w-[29px]">ENG</Fit><Fit className="h-[22px] w-[14px]">IN</Fit></div>
      <div className="ml-[16px] flex w-[76px] shrink-0 flex-col items-center text-[14.500px]"><Fit className="h-[22px] w-[60px]">08:57 PM</Fit><Fit className="h-[22px] w-[76px]">09-08-2019</Fit></div>
      <div className="relative ml-[22px]"><Note /><span className="absolute left-[9px] top-[9px] flex h-[21px] w-[21px] items-center justify-center rounded-full border border-[#aaa] bg-[#2a2d32]/90 text-[14px]">1</span></div>
      <div className="ml-[25px] h-[50px] w-px bg-[#8a8c90]" />
    </div>
  );
}

export default function App() {
  return (
    <div className="h-[1080px] w-[1920px] overflow-hidden bg-[#2b2e33]">
      <Browser />
      <Header />
      <div className="relative flex h-[872px]">
        <div className="relative flex w-[1820px] shrink-0 overflow-hidden border-t-2 border-[#202429] bg-[#333c4c]">
          <div className="w-[184px] shrink-0">
            <Svg w={184} h={870}>
              <path d="M0 0h184v870H0z" fill="#3b4656" />
              <path d="M0 331h45q5-3 7 2 5 2 20-2 25-10 45-4 20 6 40 19 15-3 27-18v542H0z" fill="#343f4e" />
              <path d="M0 685q90-40 184-73v258H0z" fill="#333b4b" />
            </Svg>
          </div>
          <WordScreen />
          <div className="flex w-[183px] items-end justify-end bg-gradient-to-b from-[#3e485a] to-[#333c4b]">
            <div className="flex h-[43px] w-[15px] flex-col items-center gap-[3px] overflow-hidden bg-[#3c4758] pt-[3px]">
              {Array.from({ length: 11 }, (_, i) => <div key={i} className="h-px w-[7px] shrink-0 bg-[#d5d8dc]" />)}
            </div>
          </div>
          <CallControls />
        </div>
        <Sidebar />
        <div className="absolute left-[1638px] top-0 flex w-[114px] flex-col items-center font-['Lato',sans-serif]">
          <div className="h-0 w-0 border-x-[7px] border-b-[6px] border-x-transparent border-b-[#e9ebeb]" />
          <div className="flex h-[55px] w-[114px] items-center justify-center rounded-[3px] bg-[#e9ebeb] pb-[3px] text-[21px] text-[#3a3d40] shadow-[0_2px_12px_rgba(0,0,0,0.3)]"><Fit className="w-[62px]">People</Fit></div>
        </div>
      </div>
      <Taskbar />
    </div>
  );
}
